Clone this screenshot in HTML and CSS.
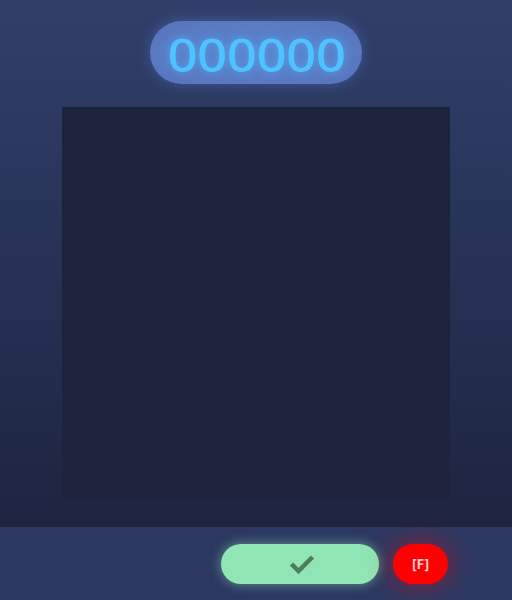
FILE: index.html
```html
<!DOCTYPE html>
<html>
<head>
<meta charset="utf-8">
<link rel="stylesheet" href="styles.css">
</head>
<body>
<div class="app">
  <main class="stage">
    <div class="counter"><span class="digits">000000</span></div>
    <div class="canvas"></div>
  </main>
  <footer class="bar">
    <button class="ok" type="button" aria-label="confirm">
      <svg width="26" height="22" viewBox="0 0 26 22"><polyline points="2.5,11 9.5,18 23.5,4" fill="none" stroke="#4d7d60" stroke-width="4.5"/></svg>
    </button>
    <button class="flag" type="button">[F]</button>
  </footer>
</div>
</body>
</html>
```
FILE: styles.css
```css
* { box-sizing: border-box; }
html, body { margin: 0; padding: 0; }
body { width: 512px; height: 600px; overflow: hidden; font-family: "Noto Sans", "Open Sans", sans-serif; }
.app { display: flex; flex-direction: column; height: 600px; }
.stage {
  height: 527px;
  background: linear-gradient(to bottom, #313f6b 0%, #1d2440 100%);
  display: flex; flex-direction: column; align-items: center;
  padding-top: 21px;
}
.counter {
  width: 212px; height: 63px; border-radius: 32px;
  background: radial-gradient(ellipse at center, #5b82cc 0%, #5a7bc4 60%, #5872ba 100%);
  box-shadow: 0 0 14px rgba(90,130,210,0.45);
  display: flex; align-items: center; justify-content: center;
}
.digits {
  display: inline-block;
  color: #4fc3ff; font-size: 46px; font-weight: 500; letter-spacing: -0.5px; line-height: 1;
  text-shadow: 0 0 8px rgba(79,195,255,0.6);
  transform: scaleX(1.15);
  margin-top: 2px;
}
.canvas {
  margin-top: 23px;
  width: 388px; height: 391px;
  background: #1d233c;
}
.bar {
  flex: 1; background: #2d3862;
  display: flex; align-items: center; justify-content: flex-start;
  padding-left: 221px; gap: 14px;
}
.ok {
  width: 158px; height: 40px; border-radius: 20px; border: 0;
  background: #8fe5b3; padding: 0;
  display: flex; align-items: center; justify-content: center;
  box-shadow: 0 0 12px rgba(143,229,179,0.55);
}
.ok svg { display: block; margin-left: 3px; }
.flag {
  width: 55px; height: 40px; border-radius: 20px; border: 0;
  background: #ff0000; color: rgba(255,255,255,0.8);
  font-family: "Noto Sans", sans-serif; font-weight: 700; font-size: 14px;
  box-shadow: 0 0 22px 4px rgba(255,0,0,0.35);
  padding: 0;
}
```
